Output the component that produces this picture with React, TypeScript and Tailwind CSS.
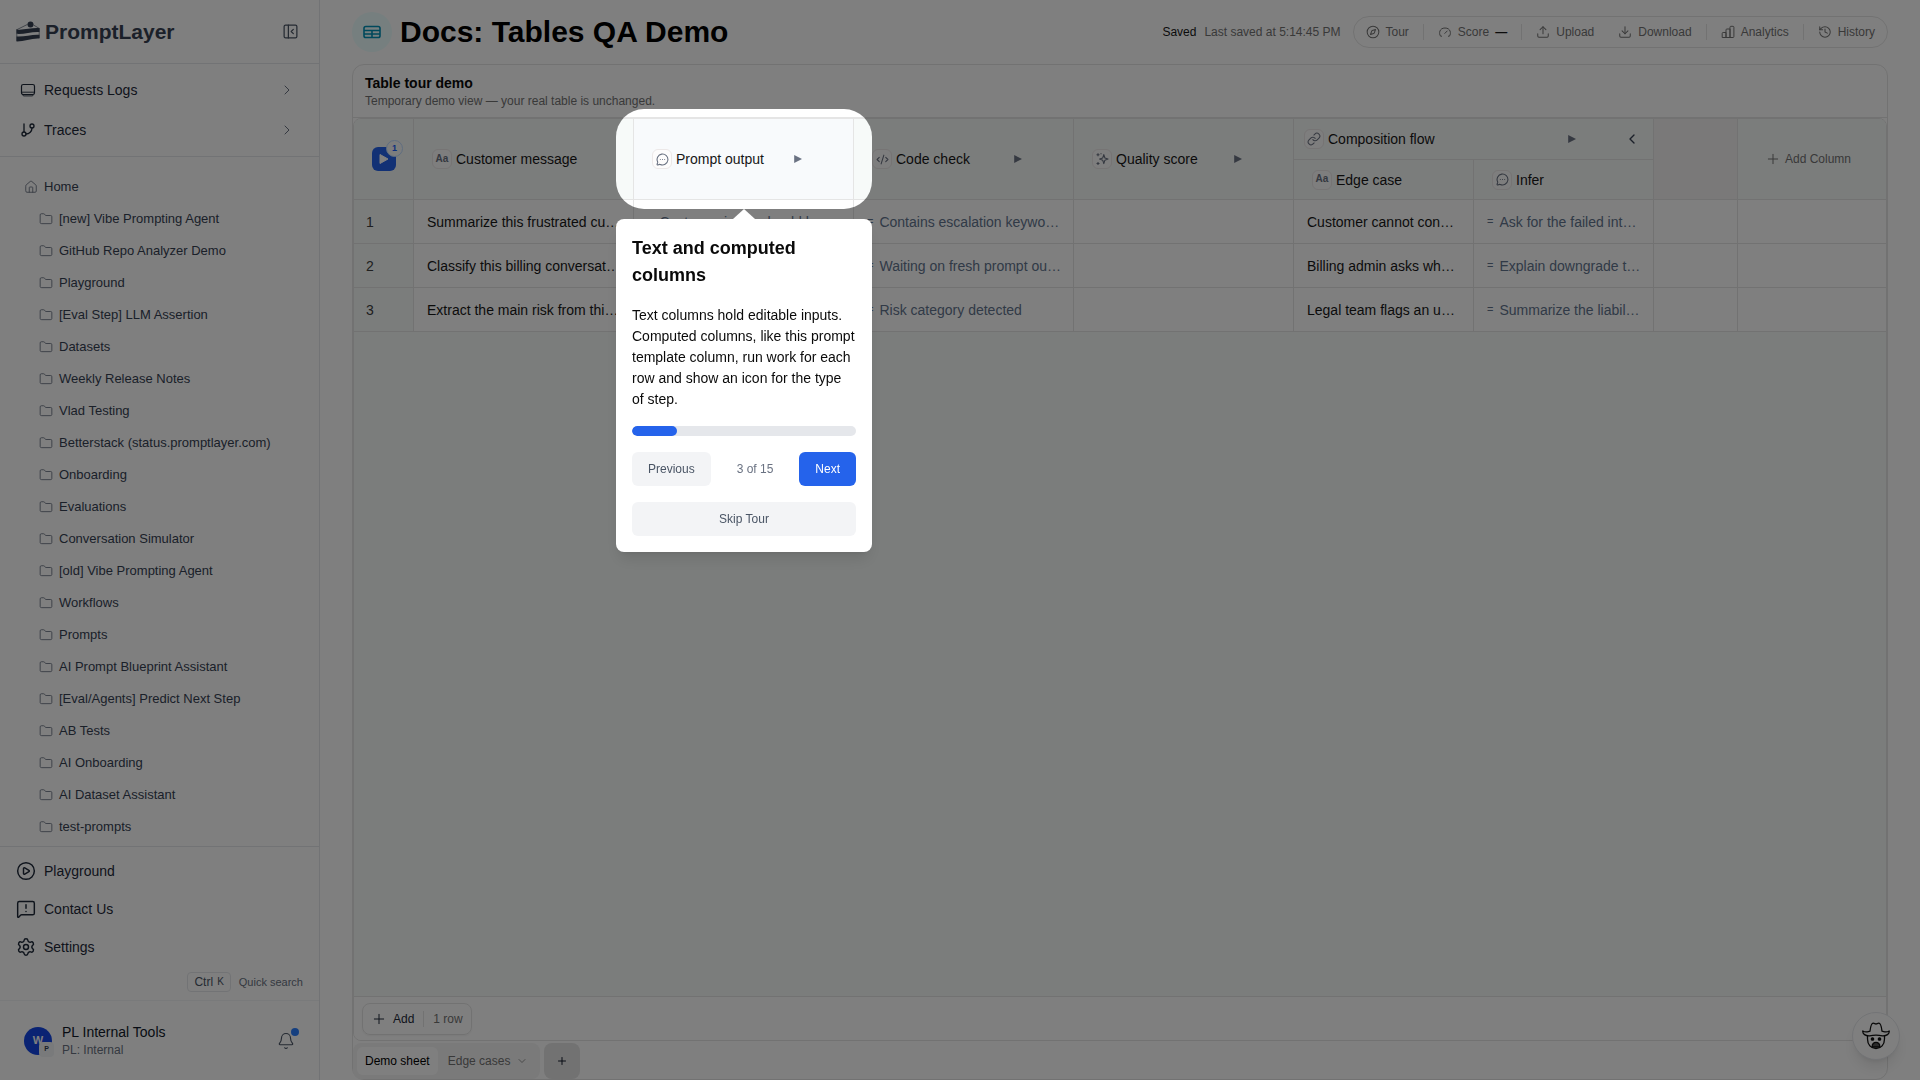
import { useState } from 'react';
import type { ReactNode } from 'react';
import {
    Bell,
    ChevronDown,
    ChevronLeft,
    ChevronRight,
    CirclePlay,
    CodeXml,
    Compass,
    Download,
    Folder,
    GitBranch,
    History,
    House,
    Link,
    MessageCircleMore,
    MessageSquareWarning,
    PanelLeftClose,
    Plus,
    Settings,
    Upload,
} from 'lucide-react';

const folders = [
    '[new] Vibe Prompting Agent',
    'GitHub Repo Analyzer Demo',
    'Playground',
    '[Eval Step] LLM Assertion',
    'Datasets',
    'Weekly Release Notes',
    'Vlad Testing',
    'Betterstack (status.promptlayer.com)',
    'Onboarding',
    'Evaluations',
    'Conversation Simulator',
    '[old] Vibe Prompting Agent',
    'Workflows',
    'Prompts',
    'AI Prompt Blueprint Assistant',
    '[Eval/Agents] Predict Next Step',
    'AB Tests',
    'AI Onboarding',
    'AI Dataset Assistant',
    'test-prompts',
];

const rows = [
    {
        message: 'Summarize this frustrated customer email',
        output: 'Customer issue should be flagged',
        check: 'Contains escalation keywords',
        edge: 'Customer cannot connect',
        infer: 'Ask for the failed integration',
    },
    {
        message: 'Classify this billing conversation',
        output: 'Billing',
        check: 'Waiting on fresh prompt output',
        edge: 'Billing admin asks whether',
        infer: 'Explain downgrade timing',
    },
    {
        message: 'Extract the main risk from this ticket',
        output: 'Contract risk',
        check: 'Risk category detected',
        edge: 'Legal team flags an unclear clause',
        infer: 'Summarize the liability risk',
    },
];

const CakeLogo = () => (
    <svg viewBox="0 0 24 22" className="h-[22px] w-6" fill="currentColor">
        <path d="M0.5 8.5 C8 9.4 16 6.4 23.5 7.2 V11 C16 10.4 8 13.4 0.5 12.8 Z" />
        <path d="M0.5 15.4 C8 16 16 13.2 23.5 13.8 V17.6 C16 17 8 20.6 0.5 20.4 Z" />
        <circle cx="14.5" cy="3.6" r="3" />
        <path d="M1 8.6 L11.5 3.4 M17.5 4 L23.2 7.4 M0.8 8 V20 M23.2 7 V17" stroke="currentColor" strokeWidth="0.6" fill="none" />
    </svg>
);

const LogsIcon = () => (
    <svg viewBox="0 0 16 16" className="h-4 w-4" fill="none" stroke="currentColor" strokeWidth="1.2">
        <rect x="1.5" y="2.5" width="13" height="10" rx="1.8" />
        <path d="M1.8 10.2 H14.2" strokeWidth="0.9" />
        <path d="M2.6 12.6 L3.4 13.9 H12.6 L13.4 12.6" strokeWidth="0.9" />
    </svg>
);

const SheetIcon = () => (
    <svg viewBox="0 0 18 14" className="h-[14px] w-[18px] text-cyan-600" fill="none" stroke="currentColor" strokeWidth="1.6">
        <rect x="1" y="1.5" width="16" height="11" rx="1.8" />
        <path d="M1 5.5 H17 M1 9 H17 M9 5.5 V12.5" />
    </svg>
);

const ScoreIcon = () => (
    <svg viewBox="0 0 14 14" className="h-[14px] w-[14px]" fill="none" stroke="currentColor" strokeWidth="1" strokeLinecap="round">
        <path d="M3.6 11.2 H2.6 C0.6 8.4 1.4 3 7 3 S13.4 8.4 11.4 11.2 H10.4" />
        <path d="M6.8 8.4 L9.2 6" />
    </svg>
);

const BarsIcon = () => (
    <svg viewBox="0 0 14 14" className="h-[14px] w-[14px]" fill="none" stroke="currentColor" strokeWidth="1" strokeLinejoin="round">
        <path d="M1.2 12.5 V8.4 C1.2 7.8 1.5 7.5 2.1 7.5 H5 V12.5 Z M5 12.5 V4.9 C5 4.3 5.3 4 5.9 4 H9 V12.5 Z M9 12.5 V2.2 C9 1.6 9.3 1.3 9.9 1.3 H12 C12.6 1.3 12.9 1.6 12.9 2.2 V11.6 C12.9 12.2 12.6 12.5 12 12.5 Z" />
    </svg>
);

const StarsIcon = () => (
    <svg viewBox="0 0 14 14" className="h-[14px] w-[14px]" fill="none" stroke="currentColor" strokeWidth="1.1" strokeLinejoin="round">
        <path d="M8.8 2.6 L9.9 6 L13 7.1 L9.9 8.2 L8.8 11.6 L7.7 8.2 L4.6 7.1 L7.7 6 Z" />
        <path d="M3 1.2 V4.2 M1.5 2.7 H4.5 M3 10 V13 M1.5 11.5 H4.5 M6 1.2 V2.2" />
    </svg>
);

const PlayTriangle = () => (
    <svg viewBox="0 0 8 8" className="h-2 w-2 text-gray-500" fill="currentColor">
        <path d="M0.2 0 L8 4 L0.2 8 Z" />
    </svg>
);

const CowboyFace = () => (
    <svg viewBox="0 0 28 28" className="h-7 w-7" fill="none" stroke="#111" strokeWidth="1.3" strokeLinejoin="round">
        <path d="M5.5 13 V17 C5.5 22.5 9 26.5 14 26.5 S22.5 22.5 22.5 17 V13" />
        <path
            d="M0.8 9 C4 11 5.5 9.6 8 9.2 C8.5 5 9.3 1.2 11.2 1.2 C12.5 1.2 13 2 14 2 S15.5 1.2 16.8 1.2 C18.7 1.2 19.5 5 20 9.2 C22.5 9.6 24 11 27.2 9 C27.6 12 24.5 14 20.5 13.8 C16 12.8 12 12.8 7.5 13.8 C3.5 14 0.4 12 0.8 9 Z"
            fill="#fff"
        />
        <circle cx="10.5" cy="17" r="1.2" fill="#111" />
        <circle cx="17.5" cy="17" r="1.2" fill="#111" />
        <path d="M10.3 25 C9.8 22 12 20.3 14 20.3 S18.2 22 17.7 25 Z" fill="#555" />
    </svg>
);

const Chip = ({ children }: { children: ReactNode }) => (
    <span className="flex h-5 w-5 shrink-0 items-center justify-center rounded-md border border-[#ece8e8] bg-[#fdfcfc] text-[10px] font-bold text-gray-500">
        {children}
    </span>
);

const ColumnHead = ({ icon, name, runnable = true }: { icon: ReactNode; name: string; runnable?: boolean }) => (
    <div className="flex items-center gap-1 pl-[18px]">
        <Chip>{icon}</Chip>
        <span className={runnable ? 'w-[114px]' : ''}>{name}</span>
        {runnable && (
            <button aria-label={`Run ${name}`}>
                <PlayTriangle />
            </button>
        )}
    </div>
);

const Computed = ({ text }: { text: string }) => (
    <div className="flex items-center gap-1.5 text-slate-500">
        <span className="text-[11px]">=</span>
        <span className="truncate">{text}</span>
    </div>
);

const NavItem = ({ icon, label }: { icon: ReactNode; label: string }) => (
    <a href="#" className="flex h-10 items-center pl-5 pr-6 text-sm text-gray-800">
        <span className="w-6">{icon}</span>
        <span className="flex-1">{label}</span>
        <ChevronRight size={16} strokeWidth={1.5} className="text-gray-500" />
    </a>
);

const BottomItem = ({ icon, label }: { icon: ReactNode; label: string }) => (
    <a href="#" className="flex h-[38px] items-center pl-4 text-sm text-gray-800">
        <span className="w-7">{icon}</span>
        {label}
    </a>
);

const Sidebar = () => (
    <aside className="flex w-80 shrink-0 flex-col border-r border-gray-200 bg-white">
        <div className="flex h-16 items-center justify-between border-b border-gray-200 pl-4 pr-5">
            <a href="#" className="flex items-center gap-[5px] text-[21px] font-bold text-gray-700">
                <CakeLogo />
                PromptLayer
            </a>
            <button aria-label="Collapse sidebar" className="text-gray-600">
                <PanelLeftClose size={17} strokeWidth={1.75} />
            </button>
        </div>
        <nav className="border-b border-gray-200 py-[6px]">
            <NavItem icon={<LogsIcon />} label="Requests Logs" />
            <NavItem icon={<GitBranch size={16} />} label="Traces" />
        </nav>
        <nav className="min-h-0 flex-1 overflow-hidden pt-[14px] text-[13px] text-gray-700">
            <a href="#" className="flex h-8 items-center gap-[6px] pl-6">
                <House size={14} strokeWidth={1.5} className="text-gray-500" />
                Home
            </a>
            {folders.map((name) => (
                <a key={name} href="#" className="flex h-8 items-center gap-[6px] pl-[39px]">
                    <Folder size={14} strokeWidth={1.5} className="text-gray-500" />
                    {name}
                </a>
            ))}
        </nav>
        <nav className="border-t border-gray-200 pt-[5px]">
            <BottomItem icon={<CirclePlay size={20} strokeWidth={1.75} />} label="Playground" />
            <BottomItem icon={<MessageSquareWarning size={20} strokeWidth={1.75} />} label="Contact Us" />
            <BottomItem icon={<Settings size={20} strokeWidth={1.75} />} label="Settings" />
        </nav>
        <div className="flex items-center justify-end gap-2 pb-2 pr-4 pt-[6px] text-[11px] text-gray-500">
            <kbd className="flex h-5 items-center gap-1 rounded border border-gray-200 px-[6px] font-['Liberation_Sans',Arial,sans-serif] text-xs text-gray-600">
                Ctrl <span className="text-[10px]">K</span>
            </kbd>
            Quick search
        </div>
        <div className="flex h-20 items-center border-t border-gray-100 pl-6 pr-6">
            <span className="relative flex h-7 w-7 items-center justify-center rounded-full bg-blue-700 text-[11px] font-bold text-white">
                W
                <span className="absolute -bottom-0.5 -right-0.5 flex h-[15px] w-[15px] items-center justify-center rounded bg-gray-100 text-[7px] font-bold text-gray-700">
                    P
                </span>
            </span>
            <div className="ml-[10px] flex-1">
                <p className="text-sm leading-[18px] text-gray-900">PL Internal Tools</p>
                <p className="text-xs leading-[18px] text-gray-500">PL: Internal</p>
            </div>
            <button aria-label="Notifications" className="relative text-gray-600">
                <Bell size={18} strokeWidth={1.5} />
                <span className="absolute -right-1 -top-1 h-2 w-2 rounded-full bg-blue-500"></span>
            </button>
        </div>
    </aside>
);

const ToolbarButton = ({ icon, label }: { icon: ReactNode; label: ReactNode }) => (
    <button className="flex items-center gap-1.5 px-3">
        {icon}
        {label}
    </button>
);

const Divider = () => <span className="mx-[2px] h-4 w-px bg-neutral-200"></span>;

const PageHeader = () => (
    <header className="flex h-16 items-center pb-3 pt-3">
        <span className="flex h-10 w-10 items-center justify-center rounded-full bg-cyan-50">
            <SheetIcon />
        </span>
        <h1 className="ml-2 flex-1 text-3xl font-bold text-black">Docs: Tables QA Demo</h1>
        <div className="flex items-center gap-2 text-xs text-neutral-500">
            <span className="text-neutral-900">Saved</span>
            <span>Last saved at 5:14:45 PM</span>
            <div className="ml-1 flex h-8 items-center rounded-full border border-neutral-200">
                <ToolbarButton icon={<Compass size={14} strokeWidth={1.75} />} label="Tour" />
                <Divider />
                <ToolbarButton
                    icon={<ScoreIcon />}
                    label={
                        <>
                            Score <b className="text-neutral-900">—</b>
                        </>
                    }
                />
                <Divider />
                <ToolbarButton icon={<Upload size={14} strokeWidth={1.75} />} label="Upload" />
                <ToolbarButton icon={<Download size={14} strokeWidth={1.75} />} label="Download" />
                <Divider />
                <ToolbarButton icon={<BarsIcon />} label="Analytics" />
                <Divider />
                <ToolbarButton icon={<History size={14} strokeWidth={1.75} />} label="History" />
            </div>
        </div>
    </header>
);

const thBase = 'border-b border-r border-neutral-200 text-left font-normal';
const th = `${thBase} bg-[#f7faf9]`;
const td = 'h-11 border-b border-r border-neutral-200 bg-white';

const DemoTable = () => (
    <table className="w-full table-fixed border-separate border-spacing-0 text-sm text-neutral-900">
        <colgroup>
            <col className="w-[60px]" />
            <col className="w-[220px]" />
            <col className="w-[220px]" />
            <col className="w-[220px]" />
            <col className="w-[220px]" />
            <col className="w-[180px]" />
            <col className="w-[180px]" />
            <col className="w-[84px]" />
            <col />
        </colgroup>
        <thead>
            <tr className="h-[41px]">
                <th rowSpan={2} className={th}>
                    <button
                        aria-label="Run all"
                        className="relative ml-[18px] flex h-6 w-6 items-center justify-center rounded-md bg-[#2563eb]"
                    >
                        <svg viewBox="0 0 10 12" className="h-3 w-[10px]" fill="#fff" stroke="#fff" strokeLinejoin="round">
                            <path d="M1 1.5 L9 6 L1 10.5 Z" />
                        </svg>
                        <span className="absolute -right-[7px] -top-[7px] flex h-[17px] w-[17px] items-center justify-center rounded-full border border-blue-200 bg-gray-50 text-[9px] font-bold text-blue-600">
                            1
                        </span>
                    </button>
                </th>
                <th rowSpan={2} className={th}>
                    <ColumnHead icon="Aa" name="Customer message" runnable={false} />
                </th>
                <th rowSpan={2} className={`${thBase} bg-[#f8fafc]`}>
                    <ColumnHead icon={<MessageCircleMore size={13} strokeWidth={2} />} name="Prompt output" />
                </th>
                <th rowSpan={2} className={th}>
                    <ColumnHead icon={<CodeXml size={13} strokeWidth={2} />} name="Code check" />
                </th>
                <th rowSpan={2} className={th}>
                    <ColumnHead icon={<StarsIcon />} name="Quality score" />
                </th>
                <th colSpan={2} className={th}>
                    <div className="flex items-center pl-[10px] pr-[13px]">
                        <Chip>
                            <Link size={14} strokeWidth={1.75} />
                        </Chip>
                        <span className="ml-1 flex-1">Composition flow</span>
                        <button aria-label="Run Composition flow">
                            <PlayTriangle />
                        </button>
                        <button aria-label="Collapse Composition flow" className="ml-12">
                            <ChevronLeft size={16} className="text-gray-700" />
                        </button>
                    </div>
                </th>
                <td rowSpan={2} className="border-b border-r border-neutral-200 bg-[#f5f3f3]"></td>
                <th rowSpan={2} className="border-b border-neutral-200 bg-[#f7faf9] pr-2 text-xs font-normal text-neutral-500">
                    <button className="mx-auto flex items-center gap-1">
                        <Plus size={16} strokeWidth={1.5} />
                        Add Column
                    </button>
                </th>
            </tr>
            <tr className="h-10">
                <th className={th}>
                    <ColumnHead icon="Aa" name="Edge case" runnable={false} />
                </th>
                <th className={th}>
                    <ColumnHead icon={<MessageCircleMore size={13} strokeWidth={2} />} name="Infer" runnable={false} />
                </th>
            </tr>
        </thead>
        <tbody>
            {rows.map((row, i) => (
                <tr key={row.message}>
                    <td className="h-11 border-b border-r border-neutral-200 bg-[#f7faf9] pl-3 text-neutral-700">{i + 1}</td>
                    <td className={`${td} px-[13px]`}>
                        <div className="truncate">{row.message}</div>
                    </td>
                    <td className={`${td} pl-[13px] pr-3`}>
                        <Computed text={row.output} />
                    </td>
                    <td className={`${td} pl-[13px] pr-3`}>
                        <Computed text={row.check} />
                    </td>
                    <td className={td}></td>
                    <td className={`${td} px-[13px]`}>
                        <div className="truncate">{row.edge}</div>
                    </td>
                    <td className={`${td} pl-[13px] pr-3`}>
                        <Computed text={row.infer} />
                    </td>
                    <td className={td}></td>
                    <td className="h-11 border-b border-neutral-200 bg-white"></td>
                </tr>
            ))}
        </tbody>
    </table>
);

const TourStep = () => {
    const [step, setStep] = useState(3);
    const total = 15;

    return (
        <div className="fixed left-[616px] top-[109px] z-50 w-64">
            {/* Spotlight around the current column header */}
            <div className="h-[100px] rounded-[28px] shadow-[0_0_0_9999px_rgba(0,0,0,0.5)]"></div>
            <svg viewBox="0 0 22 10" className="relative mx-auto h-[10px] w-[22px]" fill="#fff">
                <path d="M11 0 L22 10 H0 Z" />
            </svg>
            <div
                role="dialog"
                aria-labelledby="tour-title"
                className="relative rounded-lg bg-white p-4 text-sm leading-[21px] text-neutral-950 shadow-lg"
            >
                <h2 id="tour-title" className="text-lg font-bold leading-[27px]">
                    Text and computed columns
                </h2>
                <p className="mt-4">
                    Text columns hold editable inputs. Computed columns, like this prompt template column, run work for
                    each row and show an icon for the type of step.
                </p>
                <div className="mt-4 h-[10px] overflow-hidden rounded-full bg-gray-200">
                    <div
                        className="h-full rounded-full bg-[#2563eb]"
                        style={{ width: `${(step / total) * 100}%` }}
                    ></div>
                </div>
                <div className="mt-4 flex items-center justify-between text-xs leading-[18px]">
                    <button
                        onClick={() => setStep(Math.max(1, step - 1))}
                        className="rounded-md bg-gray-100 px-4 py-2 text-gray-600"
                    >
                        Previous
                    </button>
                    <span className="text-gray-500">
                        {step} of {total}
                    </span>
                    <button
                        onClick={() => setStep(Math.min(total, step + 1))}
                        className="rounded-md bg-[#2563eb] px-4 py-2 text-white"
                    >
                        Next
                    </button>
                </div>
                <button className="mt-4 w-full rounded-md bg-gray-100 py-2 text-xs leading-[18px] text-gray-600">
                    Skip Tour
                </button>
            </div>
        </div>
    );
};

export default function App() {
    return (
        <div className="flex h-screen overflow-hidden bg-white font-['Liberation_Sans',Arial,sans-serif]">
            <Sidebar />
            <main className="flex min-w-0 flex-1 flex-col px-8">
                <PageHeader />
                <section className="flex min-h-0 flex-1 flex-col rounded-xl border border-neutral-200">
                    <div className="border-b border-neutral-200 px-3 pb-[7px] pt-[9px]">
                        <h2 className="text-sm leading-[18px] font-bold text-neutral-950">Table tour demo</h2>
                        <p className="text-xs leading-[18px] text-neutral-500">
                            Temporary demo view — your real table is unchanged.
                        </p>
                    </div>
                    <div className="flex min-h-0 flex-1 flex-col overflow-hidden rounded-lg border border-neutral-200">
                        <div className="flex-1 overflow-hidden bg-[#f7faf9]">
                            <DemoTable />
                        </div>
                        <div className="flex h-11 shrink-0 items-center border-t border-neutral-200 bg-white px-2">
                            <div className="flex h-8 items-center rounded-lg border border-neutral-200 px-2 text-xs shadow-xs">
                                <button className="flex items-center gap-1.5 text-gray-800">
                                    <Plus size={16} strokeWidth={1.5} />
                                    Add
                                </button>
                                <span className="mx-[9px] h-4 w-px bg-neutral-200"></span>
                                <span className="text-neutral-500">1 row</span>
                            </div>
                        </div>
                    </div>
                    <div className="flex items-center gap-1 pt-0.5 text-xs">
                        <div role="tablist" className="flex h-9 items-center rounded-lg bg-neutral-100 p-1">
                            <button role="tab" aria-selected="true" className="h-full rounded-md bg-white px-2 text-black">
                                Demo sheet
                            </button>
                            <button role="tab" aria-selected="false" className="flex items-center gap-1.5 pl-[10px] pr-2 text-neutral-500">
                                Edge cases
                                <ChevronDown size={12} strokeWidth={1.5} />
                            </button>
                        </div>
                        <button aria-label="Add sheet" className="flex h-9 w-9 items-center justify-center rounded-lg bg-neutral-200 text-gray-900">
                            <Plus size={12} />
                        </button>
                    </div>
                </section>
            </main>
            <button
                aria-label="Open assistant"
                className="fixed bottom-5 right-5 flex h-12 w-12 items-center justify-center rounded-full border border-gray-200 bg-white shadow-lg"
            >
                <CowboyFace />
            </button>
            <TourStep />
        </div>
    );
}
